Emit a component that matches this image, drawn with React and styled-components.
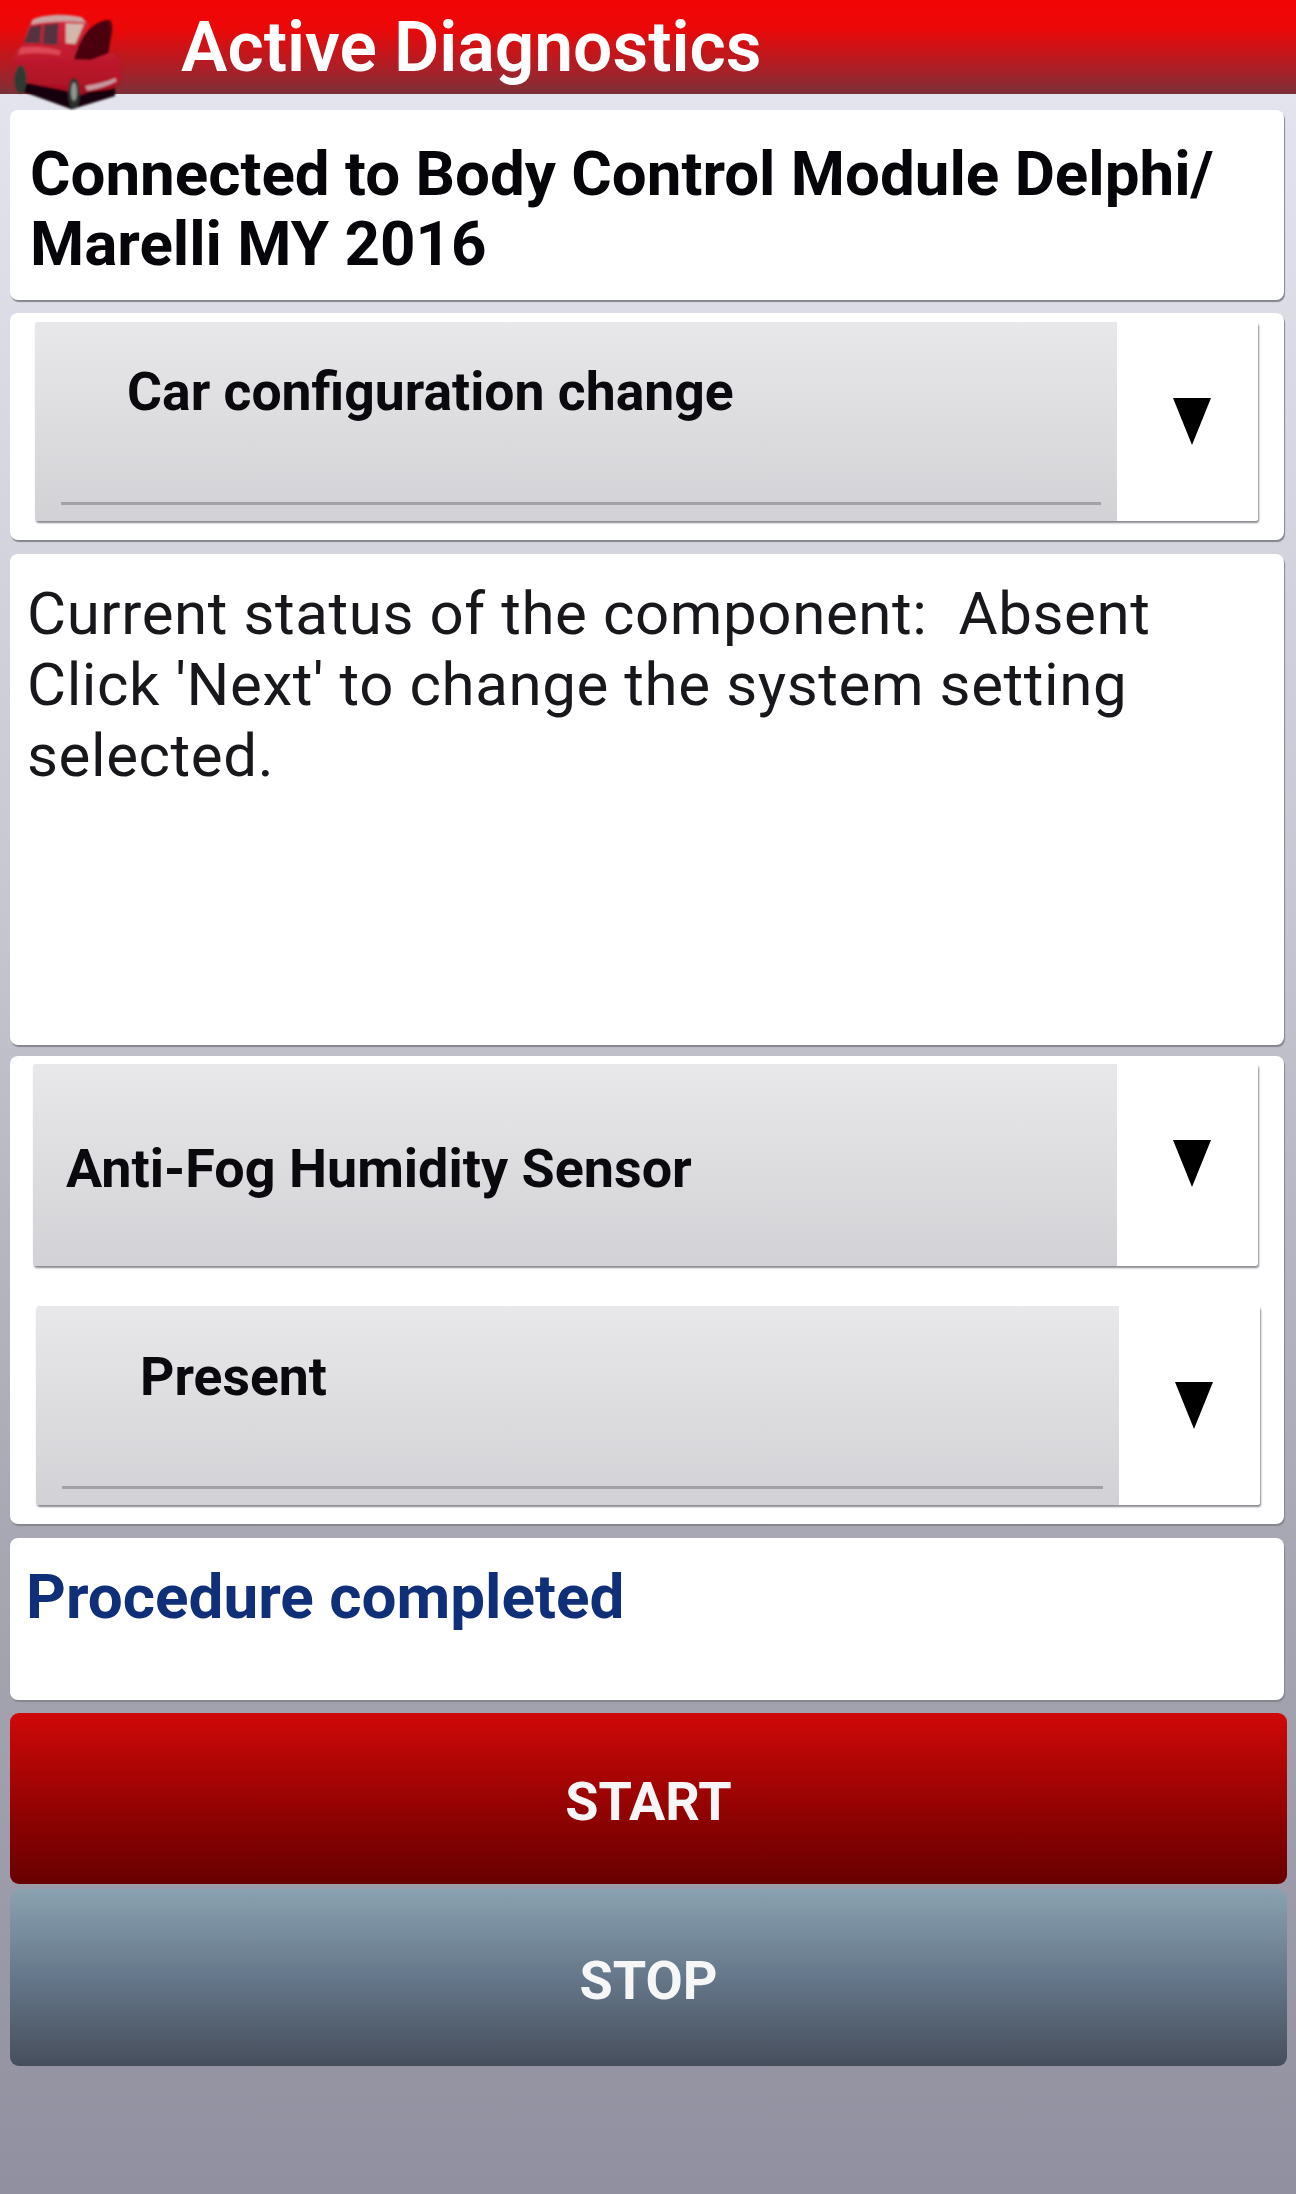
import styled, { createGlobalStyle } from "styled-components";

const GlobalStyle = createGlobalStyle`
  html, body {
    margin: 0;
    padding: 0;
  }
  body {
    font-family: Roboto, "Liberation Sans", sans-serif;
    background: #9090a0;
  }
`;

const Page = styled.div`
  width: 1296px;
  height: 2194px;
  overflow: hidden;
  background: linear-gradient(180deg, #e4e4ee 4%, #c8c8d2 40%, #a8a8b4 70%, #9090a0 100%);
`;

const Header = styled.header`
  position: relative;
  height: 94px;
  padding-left: 181px;
  box-sizing: border-box;
  background: linear-gradient(180deg, #f30505 0%, #ec0808 30%, #a82028 75%, #7c3038 100%);
  color: #fff;
  font-size: 69.5px;
  font-weight: 600;
  line-height: 96px;
`;

const CarLogo = styled.svg`
  position: absolute;
  left: 0;
  top: 0;
  width: 200px;
  height: 120px;
`;

const Column = styled.main`
  display: flex;
  flex-direction: column;
  padding: 16px 12px 0 10px;
`;

const Card = styled.section`
  height: ${(p) => p.$h}px;
  margin-bottom: ${(p) => p.$gap}px;
  padding: ${(p) => p.$pad || "0"};
  box-sizing: border-box;
  background: #fff;
  border-radius: 8px;
  box-shadow: 1px 2px 1px #85858d;
`;

const Title = styled.h1`
  margin: 0;
  padding: 29px 0 0 20px;
  color: #05050a;
  font-size: 61.9px;
  font-weight: 700;
  line-height: 70px;
`;

const Body = styled.p`
  margin: 0;
  padding: 24px 0 0 17px;
  color: #18181c;
  font-size: 60px;
  font-weight: 400;
  line-height: 71px;
  letter-spacing: 0.6px;
  white-space: pre-wrap;
`;

const Status = styled.p`
  margin: 0;
  padding: 24px 0 0 16px;
  color: #0f3078;
  font-size: 62px;
  font-weight: 700;
  line-height: 70px;
`;

const Select = styled.div`
  display: flex;
  height: ${(p) => p.$h || 199}px;
  margin: ${(p) => p.$margin};
  box-shadow: 1px 2px 2px #8a8a90;
  border-radius: 3px;
  overflow: hidden;
`;

const SelectField = styled.div`
  flex: 1;
  display: flex;
  flex-direction: column;
  box-sizing: border-box;
  padding: ${(p) => p.$pad};
  background: linear-gradient(180deg, #e8e8ea 0%, #d2d2d6 100%);
  color: #0a0a0e;
  font-size: ${(p) => p.$size || 53.5}px;
  font-weight: 700;
  line-height: 60px;
`;

const SelectLine = styled.span`
  display: block;
  height: 3px;
  margin: auto 16px 16px ${(p) => p.$inset}px;
  background: #a2a2a6;
`;

const SelectArrow = styled.div`
  width: 141px;
  flex: none;
  display: flex;
  justify-content: center;
  align-items: ${(p) => (p.$raised ? "flex-start" : "center")};
  padding: ${(p) => (p.$raised ? "76px 0 0 8px" : "0 0 0 8px")};
  box-sizing: border-box;
  background: #fff;
`;

const Triangle = styled.svg`
  width: 38px;
  height: 47px;
  fill: #000;
`;

const ActionButton = styled.button`
  display: block;
  width: 1277px;
  height: ${(p) => p.$h}px;
  margin-bottom: ${(p) => p.$gap}px;
  padding: 5px 0 0;
  border: none;
  border-radius: 9px;
  background: ${(p) => p.$bg};
  color: #f6f6f6;
  font-family: inherit;
  font-size: 54px;
  font-weight: 700;
`;

function Arrow() {
  return (
    <Triangle viewBox="0 0 38 47">
      <polygon points="0,0 38,0 19,47" />
    </Triangle>
  );
}

function Car() {
  return (
    <CarLogo viewBox="0 0 600 360">
      <defs>
        <filter id="soft">
          <feGaussianBlur stdDeviation="2.5" />
        </filter>
        <linearGradient id="paint" x1="0" y1="0" x2="0" y2="1">
          <stop offset="0" stopColor="#d8283c" />
          <stop offset="1" stopColor="#a80e22" />
        </linearGradient>
      </defs>
      <g filter="url(#soft)">
        <path d="M55 270 L215 328 L345 288 L345 250 L60 250 Z" fill="#14040a" />
        <path d="M38 185 C40 155 58 140 72 128 C76 100 84 72 98 58 C110 46 200 40 245 52 L268 72 L236 150 L225 172 L340 158 C356 170 364 190 365 225 C362 250 350 262 330 268 L262 276 C240 290 215 290 200 272 L85 250 C60 240 40 220 38 185 Z" fill="url(#paint)" />
        <path d="M96 62 C112 44 200 38 246 52 L258 68 C200 62 140 64 94 74 Z" fill="#cda2a2" />
        <path d="M72 128 L90 80 L125 74 L120 130 Z M128 132 L132 74 L176 70 L172 136 Z" fill="#54333f" />
        <path d="M197 70 L252 72 L226 132 L197 130 Z" fill="#d2b8aa" />
        <path d="M222 178 C236 130 252 100 272 84 C292 66 316 58 330 60 C340 76 336 100 332 116 L325 160 L272 180 Z" fill="#4c050e" />
        <path d="M256 258 C290 252 320 246 346 234 L350 244 C322 258 292 268 262 272 Z" fill="#c79aa0" />
        <path d="M62 142 C100 138 150 142 182 152 L180 166 C140 158 95 158 54 164 Z" fill="#de4656" />
        <ellipse cx="62" cy="238" rx="18" ry="42" fill="#2e3a32" />
        <ellipse cx="222" cy="280" rx="18" ry="46" fill="#2e322e" />
        <ellipse cx="222" cy="275" rx="9" ry="28" fill="#8d958c" />
      </g>
    </CarLogo>
  );
}

export default function App() {
  return (
    <Page>
      <GlobalStyle />
      <Header>
        <Car />
        Active Diagnostics
      </Header>
      <Column>
        <Card $h={190} $gap={13}>
          <Title>
            Connected to Body Control Module Delphi/
            <br />
            Marelli MY 2016
          </Title>
        </Card>
        <Card $h={227} $gap={14} $pad="9px 26px 0 25px">
          <Select $margin="0">
            <SelectField $pad="40px 0 0 92px">
              Car configuration change
              <SelectLine $inset={-66} />
            </SelectField>
            <SelectArrow>
              <Arrow />
            </SelectArrow>
          </Select>
        </Card>
        <Card $h={491} $gap={11}>
          <Body>
            {"Current status of the component:  Absent\nClick 'Next' to change the system setting\nselected."}
          </Body>
        </Card>
        <Card $h={468} $gap={14} $pad="8px 26px 0 23px">
          <Select $h={202} $margin="0 0 40px">
            <SelectField $size={53.9} $pad="75px 0 0 33px">Anti-Fog Humidity Sensor</SelectField>
            <SelectArrow $raised>
              <Arrow />
            </SelectArrow>
          </Select>
          <Select $margin="0 -2px 0 3px">
            <SelectField $pad="41px 0 0 104px">
              Present
              <SelectLine $inset={-78} />
            </SelectField>
            <SelectArrow>
              <Arrow />
            </SelectArrow>
          </Select>
        </Card>
        <Card $h={162} $gap={13}>
          <Status>Procedure completed</Status>
        </Card>
        <ActionButton $h={171} $gap={5} $bg="linear-gradient(180deg, #d00808 0%, #8a0202 65%, #680000 100%)">
          START
        </ActionButton>
        <ActionButton $h={177} $gap={0} $bg="linear-gradient(180deg, #8aa2b0 0%, #65778a 50%, #464e5c 100%)">
          STOP
        </ActionButton>
      </Column>
    </Page>
  );
}
